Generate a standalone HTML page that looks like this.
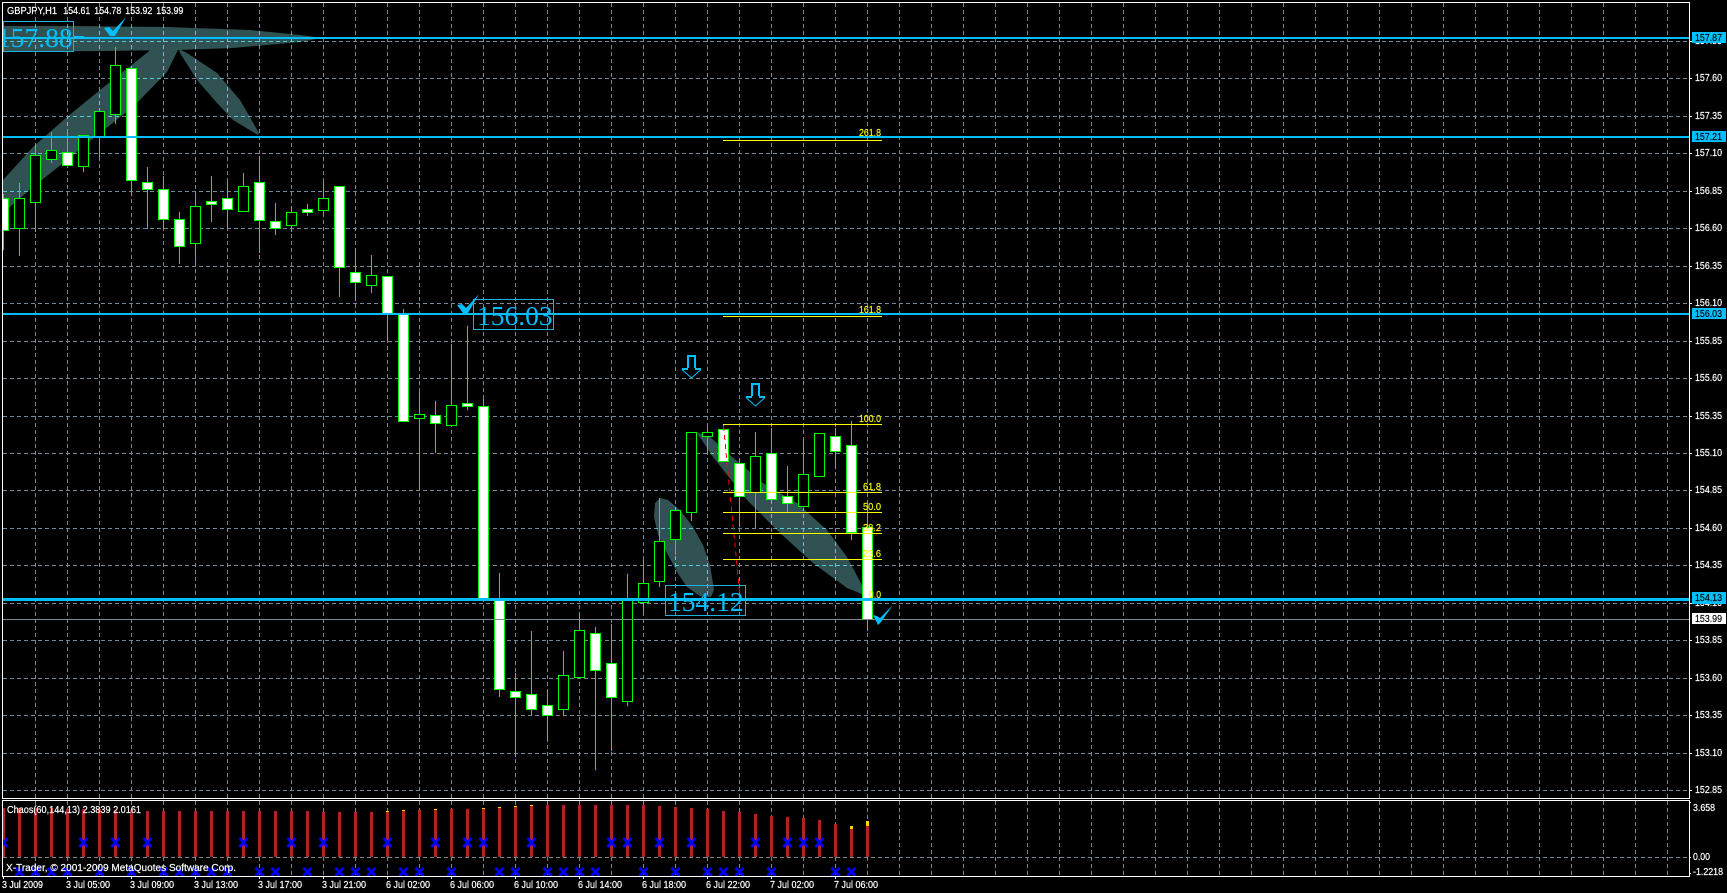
<!DOCTYPE html>
<html>
<head>
<meta charset="utf-8">
<title>GBPJPY,H1</title>
<style>
html,body{margin:0;padding:0;background:#000;width:1727px;height:893px;overflow:hidden}
svg{display:block}
.t{font-family:"Liberation Sans",sans-serif;font-size:10px;fill:#fff;stroke:#fff;stroke-width:.2}
.f{font-family:"Liberation Sans",sans-serif;font-size:10px;fill:#ff0;stroke:#ff0;stroke-width:.15}
.b{font-family:"Liberation Serif",serif;font-size:27.5px;fill:#00bfff}
.k{font-family:"Liberation Sans",sans-serif;font-size:10px;fill:#000;stroke:#000;stroke-width:.15}
</style>
</head>
<body>
<svg width="1727" height="893" viewBox="0 0 1727 893" xmlns="http://www.w3.org/2000/svg">
<defs>
<clipPath id="chart"><rect x="3" y="3" width="1686" height="873"/></clipPath>
<clipPath id="ell">
<polygon points="3,26 73,26 167,27 250,30 300,35 322,38 300,42 233,48 178,50 100,51 3,52"/>
<polygon points="177,42 153,48 100,90 67,117 33,147 3,180 3,213 33,187 67,160 100,133 133,107 167,72 178,50"/>
<polygon points="179,49 187,53 217,73 240,100 259,133 258,135 233,120 217,103 197,80 180,53"/>
<polygon points="660,498 668,500 680,510 693,527 703,545 710,565 714,590 711,597 700,596 687,587 677,572 667,553 658,535 654,517 655,503"/>
<polygon points="697,433 708,435 730,455 763,483 797,503 827,530 847,557 863,587 864,595 847,588 813,563 780,533 747,500 713,457"/>
</clipPath>
<path id="grid" fill="none" stroke-dasharray="4 3" d="M3 41.5H1689M3 78.5H1689M3 116.5H1689M3 153.5H1689M3 191.5H1689M3 228.5H1689M3 266.5H1689M3 303.5H1689M3 341.5H1689M3 378.5H1689M3 416.5H1689M3 453.5H1689M3 490.5H1689M3 528.5H1689M3 565.5H1689M3 603.5H1689M3 640.5H1689M3 678.5H1689M3 715.5H1689M3 753.5H1689M3 790.5H1689M3 857.5H1689
M35.5 3V876M67.5 3V876M99.5 3V876M131.5 3V876M163.5 3V876M195.5 3V876M227.5 3V876M259.5 3V876M291.5 3V876M323.5 3V876M355.5 3V876M387.5 3V876M419.5 3V876M451.5 3V876M483.5 3V876M515.5 3V876M547.5 3V876M579.5 3V876M611.5 3V876M643.5 3V876M675.5 3V876M707.5 3V876M739.5 3V876M771.5 3V876M803.5 3V876M835.5 3V876M867.5 3V876M899.5 3V876M931.5 3V876M963.5 3V876M995.5 3V876M1027.5 3V876M1059.5 3V876M1091.5 3V876M1123.5 3V876M1155.5 3V876M1187.5 3V876M1219.5 3V876M1251.5 3V876M1283.5 3V876M1315.5 3V876M1347.5 3V876M1379.5 3V876M1411.5 3V876M1443.5 3V876M1475.5 3V876M1507.5 3V876M1539.5 3V876M1571.5 3V876M1603.5 3V876M1635.5 3V876M1667.5 3V876"/>
</defs>
<rect width="1727" height="893" fill="#000"/>

<g clip-path="url(#chart)">
<!-- ellipses -->
<rect x="0" y="0" width="1727" height="893" fill="#315252" clip-path="url(#ell)"/>
<!-- grid -->
<g shape-rendering="crispEdges">
<use href="#grid" stroke="#778899"/>
<g clip-path="url(#ell)"><use href="#grid" stroke="#58c7d6"/></g>
</g>

<!-- chaos histogram -->
<g shape-rendering="crispEdges" fill="none" stroke-width="3">
<path stroke="#b22222" d="M3.5 808V857M19.5 808V857M35.5 808V857M51.5 808V857M67.5 809V857M83.5 809V857M99.5 809V857M115.5 810V857M131.5 810V857M147.5 811V857M163.5 811V857M179.5 811V857M195.5 811V857M211.5 811V857M227.5 811V857M243.5 811V857M259.5 811V857M275.5 811V857M291.5 811V857M307.5 811V857M323.5 812V857M339.5 812V857M355.5 812V857M371.5 812V857M387.5 812V857M403.5 811V857M419.5 810V857M435.5 810V857M451.5 809V857M467.5 809V857M483.5 809V857M499.5 808V857M515.5 807V857M531.5 806V857M547.5 805V857M563.5 805V857M579.5 805V857M595.5 805V857M611.5 805V857M627.5 805V857M643.5 805V857M659.5 806V857M675.5 807V857M691.5 808V857M707.5 809V857M723.5 811V857M739.5 812V857M755.5 814V857M771.5 816V857M787.5 817V857M803.5 818V857M819.5 820V857M835.5 824V857M851.5 829V857M867.5 826V857"/>
<path stroke="#ffd700" d="M387.5 811V812M403.5 810V811M435.5 809V810M483.5 808V809M499.5 807V808M515.5 806V807M531.5 805V806M851.5 826V829M867.5 821V826"/>
</g>

<!-- blue X marks -->
<path fill="none" stroke="#0000ff" stroke-width="2.8" d="M-.5 838l8 9m0-9l-8 9M79.5 838l8 9m0-9l-8 9M111.5 838l8 9m0-9l-8 9M143.5 838l8 9m0-9l-8 9M239.5 838l8 9m0-9l-8 9M287.5 838l8 9m0-9l-8 9M319.5 838l8 9m0-9l-8 9M383.5 838l8 9m0-9l-8 9M431.5 838l8 9m0-9l-8 9M463.5 838l8 9m0-9l-8 9M479.5 838l8 9m0-9l-8 9M527.5 838l8 9m0-9l-8 9M607.5 838l8 9m0-9l-8 9M623.5 838l8 9m0-9l-8 9M655.5 838l8 9m0-9l-8 9M687.5 838l8 9m0-9l-8 9M751.5 838l8 9m0-9l-8 9M783.5 838l8 9m0-9l-8 9M799.5 838l8 9m0-9l-8 9M815.5 838l8 9m0-9l-8 9
M15.5 868l8 8m0-8l-8 8M31.5 868l8 8m0-8l-8 8M47.5 868l8 8m0-8l-8 8M63.5 868l8 8m0-8l-8 8M95.5 868l8 8m0-8l-8 8M127.5 868l8 8m0-8l-8 8M159.5 868l8 8m0-8l-8 8M175.5 868l8 8m0-8l-8 8M191.5 868l8 8m0-8l-8 8M207.5 868l8 8m0-8l-8 8M223.5 868l8 8m0-8l-8 8M255.5 868l8 8m0-8l-8 8M271.5 868l8 8m0-8l-8 8M303.5 868l8 8m0-8l-8 8M335.5 868l8 8m0-8l-8 8M351.5 868l8 8m0-8l-8 8M367.5 868l8 8m0-8l-8 8M399.5 868l8 8m0-8l-8 8M415.5 868l8 8m0-8l-8 8M447.5 868l8 8m0-8l-8 8M495.5 868l8 8m0-8l-8 8M511.5 868l8 8m0-8l-8 8M543.5 868l8 8m0-8l-8 8M559.5 868l8 8m0-8l-8 8M575.5 868l8 8m0-8l-8 8M591.5 868l8 8m0-8l-8 8M639.5 868l8 8m0-8l-8 8M671.5 868l8 8m0-8l-8 8M703.5 868l8 8m0-8l-8 8M719.5 868l8 8m0-8l-8 8M735.5 868l8 8m0-8l-8 8M767.5 868l8 8m0-8l-8 8M831.5 868l8 8m0-8l-8 8M847.5 868l8 8m0-8l-8 8"/>

<!-- candles -->
<g shape-rendering="crispEdges" stroke="#00ff00">
<path fill="none" d="M3.5 194V250M19.5 183V256M35.5 147V232M51.5 132V163M67.5 130V165M83.5 135V172M99.5 111V157M115.5 47V124M131.5 68V196M147.5 167V229M163.5 176V229M179.5 212V264M195.5 194V262M211.5 176V222M227.5 182V228M243.5 173V211M259.5 156V253M275.5 203V235M291.5 206V232M307.5 204V216M323.5 182V215M339.5 186V297M355.5 248V301M371.5 255V293M387.5 276V340M403.5 309V421M419.5 392V490M435.5 401V453M451.5 344V425M467.5 326V410M483.5 398V600M499.5 573V697M515.5 673V757M531.5 631V715M547.5 690V741M563.5 651V716M579.5 613V677M595.5 627V770M611.5 624V751M627.5 574V706M643.5 560V613M659.5 498V587M675.5 510V555M691.5 432V521M707.5 427V453M723.5 424V461M739.5 458V527M755.5 432V528M771.5 428V499M787.5 466V512M803.5 439V506M819.5 433V476M835.5 428V469M851.5 421V540M867.5 500V631"/>
<path fill="#000" d="M14.5 198.5h10v30h-10zM30.5 155.5h10v47h-10zM46.5 150.5h10v9h-10zM78.5 135.5h10v31h-10zM94.5 111.5h10v26h-10zM110.5 65.5h10v49h-10zM190.5 206.5h10v37h-10zM238.5 186.5h10v25h-10zM286.5 212.5h10v13h-10zM318.5 198.5h10v12h-10zM366.5 275.5h10v10h-10zM414.5 414.5h10v4h-10zM446.5 405.5h10v20h-10zM558.5 675.5h10v34h-10zM574.5 630.5h10v47h-10zM622.5 599.5h10v102h-10zM638.5 583.5h10v19h-10zM654.5 541.5h10v40h-10zM670.5 510.5h10v29h-10zM686.5 432.5h10v80h-10zM702.5 432.5h10v4h-10zM750.5 456.5h10v36h-10zM798.5 474.5h10v32h-10zM814.5 433.5h10v43h-10z"/>
<path fill="#fff" d="M-1.5 198.5h10v32h-10zM62.5 152.5h10v13h-10zM126.5 68.5h10v112h-10zM142.5 182.5h10v7h-10zM158.5 189.5h10v30h-10zM174.5 219.5h10v27h-10zM206.5 201.5h10v3h-10zM222.5 198.5h10v11h-10zM254.5 182.5h10v38h-10zM270.5 221.5h10v7h-10zM302.5 209.5h10v3h-10zM334.5 186.5h10v81h-10zM350.5 272.5h10v10h-10zM382.5 276.5h10v37h-10zM398.5 313.5h10v108h-10zM430.5 415.5h10v8h-10zM462.5 403.5h10v3h-10zM478.5 406.5h10v194h-10zM494.5 599.5h10v90h-10zM510.5 691.5h10v6h-10zM526.5 694.5h10v15h-10zM542.5 705.5h10v10h-10zM590.5 633.5h10v37h-10zM606.5 663.5h10v34h-10zM718.5 429.5h10v32h-10zM734.5 463.5h10v33h-10zM766.5 453.5h10v46h-10zM782.5 496.5h10v7h-10zM830.5 436.5h10v15h-10zM846.5 445.5h10v87h-10zM862.5 527.5h10v92h-10z"/>
</g>

<!-- bid line -->
<rect x="3" y="619" width="1686" height="1" fill="#7f8c96"/>

<!-- red trend -->
<path d="M723.5 426L740 597" fill="none" stroke="#ff0000" stroke-width="1" stroke-dasharray="5 4" shape-rendering="crispEdges"/>

<!-- fibo -->
<g shape-rendering="crispEdges" fill="#ffff00">
<rect x="723" y="140" width="159" height="1"/>
<rect x="723" y="316" width="159" height="1"/>
<rect x="723" y="424" width="159" height="1"/>
<rect x="723" y="492" width="159" height="1"/>
<rect x="723" y="512" width="159" height="1"/>
<rect x="723" y="533" width="159" height="1"/>
<rect x="723" y="559" width="159" height="1"/>
</g>
<text class="f" x="859" y="136" textLength="22" lengthAdjust="spacingAndGlyphs">261.8</text>
<text class="f" x="859" y="313" textLength="22" lengthAdjust="spacingAndGlyphs">161.8</text>
<text class="f" x="859" y="422" textLength="22" lengthAdjust="spacingAndGlyphs">100.0</text>
<text class="f" x="863" y="490" textLength="18" lengthAdjust="spacingAndGlyphs">61.8</text>
<text class="f" x="863" y="510" textLength="18" lengthAdjust="spacingAndGlyphs">50.0</text>
<text class="f" x="863" y="531" textLength="18" lengthAdjust="spacingAndGlyphs">38.2</text>
<text class="f" x="863" y="557" textLength="18" lengthAdjust="spacingAndGlyphs">23.6</text>
<text class="f" x="869" y="598" textLength="12" lengthAdjust="spacingAndGlyphs">0.0</text>

<!-- blue hlines -->
<g shape-rendering="crispEdges" fill="#00bfff">
<rect x="3" y="37" width="1686" height="2"/>
<rect x="3" y="136" width="1686" height="2"/>
<rect x="3" y="313" width="1686" height="2"/>
<rect x="3" y="598" width="1686" height="3"/>
</g>
<rect x="74" y="36" width="10" height="1" fill="#00bfff"/>

<!-- price callouts -->
<g fill="none" stroke="#1fb0e0" shape-rendering="crispEdges">
<rect x="3.5" y="21.5" width="70" height="30"/>
<rect x="473.5" y="299.5" width="80" height="30"/>
<rect x="665.5" y="585.5" width="80" height="30"/>
</g>
<text class="b" x="-3" y="47">157.88</text>
<text class="b" x="477" y="325">156.03</text>
<text class="b" x="668" y="611">154.12</text>

<!-- check marks -->
<g fill="#00bfff">
<polygon points="104,28 109,27 113,31 126,17 115,36 110,36"/>
<polygon points="457,305 462,304 466,308 479,294 468,313 463,313"/>
<polygon points="873,615 877,616 880,618 893,605 881,622 878,625"/>
</g>

<!-- arrows -->
<g fill="none" stroke="#00bfff">
<path stroke-width="2" d="M688 368V356H695V368M682 369H688M695 369H701"/>
<path stroke-width="1" d="M682 369.5L691.5 378L701 369.5"/>
<path stroke-width="2" d="M752 396V384H759V396M746 397H752M759 397H765"/>
<path stroke-width="1" d="M746 397.5L755.5 406L765 397.5"/>
</g>
</g>

<!-- frames -->
<g fill="none" stroke="#fff" shape-rendering="crispEdges">
<rect x="2.5" y="2.5" width="1687" height="796"/>
<rect x="2.5" y="800.5" width="1687" height="76"/>
<path d="M1689 41.5h3M1689 78.5h3M1689 116.5h3M1689 153.5h3M1689 191.5h3M1689 228.5h3M1689 266.5h3M1689 303.5h3M1689 341.5h3M1689 378.5h3M1689 416.5h3M1689 453.5h3M1689 490.5h3M1689 528.5h3M1689 565.5h3M1689 603.5h3M1689 640.5h3M1689 678.5h3M1689 715.5h3M1689 753.5h3M1689 790.5h3M1689 802.5h2M1689 857.5h2M1689 873.5h2
M3.5 876v3M67.5 876v3M131.5 876v3M195.5 876v3M259.5 876v3M323.5 876v3M387.5 876v3M451.5 876v3M515.5 876v3M579.5 876v3M643.5 876v3M707.5 876v3M771.5 876v3M835.5 876v3"/>
</g>

<!-- top-left texts -->
<text class="t" x="7" y="14" textLength="50" lengthAdjust="spacingAndGlyphs">GBPJPY,H1</text>
<text class="t" x="63.3" y="14" textLength="27" lengthAdjust="spacingAndGlyphs">154.61</text>
<text class="t" x="94.3" y="14" textLength="27" lengthAdjust="spacingAndGlyphs">154.78</text>
<text class="t" x="125.3" y="14" textLength="27" lengthAdjust="spacingAndGlyphs">153.92</text>
<text class="t" x="156.3" y="14" textLength="27" lengthAdjust="spacingAndGlyphs">153.99</text>
<text class="t" x="7" y="813" textLength="134" lengthAdjust="spacingAndGlyphs">Chaos(60,144,13) 2.3839 2.0161</text>
<text class="t" x="6" y="871" textLength="230" lengthAdjust="spacingAndGlyphs">X-Trader, © 2001-2009 MetaQuotes Software Corp.</text>

<!-- price axis -->
<g>
<text class="t" x="1695" y="44" textLength="27" lengthAdjust="spacingAndGlyphs">157.85</text>
<text class="t" x="1695" y="81" textLength="27" lengthAdjust="spacingAndGlyphs">157.60</text>
<text class="t" x="1695" y="119" textLength="27" lengthAdjust="spacingAndGlyphs">157.35</text>
<text class="t" x="1695" y="156" textLength="27" lengthAdjust="spacingAndGlyphs">157.10</text>
<text class="t" x="1695" y="194" textLength="27" lengthAdjust="spacingAndGlyphs">156.85</text>
<text class="t" x="1695" y="231" textLength="27" lengthAdjust="spacingAndGlyphs">156.60</text>
<text class="t" x="1695" y="269" textLength="27" lengthAdjust="spacingAndGlyphs">156.35</text>
<text class="t" x="1695" y="306" textLength="27" lengthAdjust="spacingAndGlyphs">156.10</text>
<text class="t" x="1695" y="344" textLength="27" lengthAdjust="spacingAndGlyphs">155.85</text>
<text class="t" x="1695" y="381" textLength="27" lengthAdjust="spacingAndGlyphs">155.60</text>
<text class="t" x="1695" y="419" textLength="27" lengthAdjust="spacingAndGlyphs">155.35</text>
<text class="t" x="1695" y="456" textLength="27" lengthAdjust="spacingAndGlyphs">155.10</text>
<text class="t" x="1695" y="493" textLength="27" lengthAdjust="spacingAndGlyphs">154.85</text>
<text class="t" x="1695" y="531" textLength="27" lengthAdjust="spacingAndGlyphs">154.60</text>
<text class="t" x="1695" y="568" textLength="27" lengthAdjust="spacingAndGlyphs">154.35</text>
<text class="t" x="1695" y="606" textLength="27" lengthAdjust="spacingAndGlyphs">154.10</text>
<text class="t" x="1695" y="643" textLength="27" lengthAdjust="spacingAndGlyphs">153.85</text>
<text class="t" x="1695" y="681" textLength="27" lengthAdjust="spacingAndGlyphs">153.60</text>
<text class="t" x="1695" y="718" textLength="27" lengthAdjust="spacingAndGlyphs">153.35</text>
<text class="t" x="1695" y="756" textLength="27" lengthAdjust="spacingAndGlyphs">153.10</text>
<text class="t" x="1695" y="793" textLength="27" lengthAdjust="spacingAndGlyphs">152.85</text>

<g shape-rendering="crispEdges">
<rect x="1692" y="32" width="34" height="11" fill="#00bfff"/>
<rect x="1692" y="131" width="34" height="11" fill="#00bfff"/>
<rect x="1692" y="308" width="34" height="11" fill="#00bfff"/>
<rect x="1692" y="592" width="34" height="12" fill="#00bfff"/>
<rect x="1692" y="613" width="34" height="11" fill="#fff"/>
</g>
<text class="k" x="1695" y="41" textLength="27" lengthAdjust="spacingAndGlyphs">157.87</text>
<text class="k" x="1695" y="140" textLength="27" lengthAdjust="spacingAndGlyphs">157.21</text>
<text class="k" x="1695" y="317" textLength="27" lengthAdjust="spacingAndGlyphs">156.03</text>
<text class="k" x="1695" y="601" textLength="27" lengthAdjust="spacingAndGlyphs">154.13</text>
<text class="k" x="1695" y="622" textLength="27" lengthAdjust="spacingAndGlyphs">153.99</text>

<text class="t" x="1693" y="811" textLength="22" lengthAdjust="spacingAndGlyphs">3.658</text>
<text class="t" x="1693" y="860" textLength="17" lengthAdjust="spacingAndGlyphs">0.00</text>
<text class="t" x="1693" y="875" textLength="30" lengthAdjust="spacingAndGlyphs">-1.2218</text>
</g>

<!-- time axis -->
<g>
<text class="t" x="2" y="888" textLength="41" lengthAdjust="spacingAndGlyphs">3 Jul 2009</text>
<text class="t" x="66" y="888" textLength="44" lengthAdjust="spacingAndGlyphs">3 Jul 05:00</text>
<text class="t" x="130" y="888" textLength="44" lengthAdjust="spacingAndGlyphs">3 Jul 09:00</text>
<text class="t" x="194" y="888" textLength="44" lengthAdjust="spacingAndGlyphs">3 Jul 13:00</text>
<text class="t" x="258" y="888" textLength="44" lengthAdjust="spacingAndGlyphs">3 Jul 17:00</text>
<text class="t" x="322" y="888" textLength="44" lengthAdjust="spacingAndGlyphs">3 Jul 21:00</text>
<text class="t" x="386" y="888" textLength="44" lengthAdjust="spacingAndGlyphs">6 Jul 02:00</text>
<text class="t" x="450" y="888" textLength="44" lengthAdjust="spacingAndGlyphs">6 Jul 06:00</text>
<text class="t" x="514" y="888" textLength="44" lengthAdjust="spacingAndGlyphs">6 Jul 10:00</text>
<text class="t" x="578" y="888" textLength="44" lengthAdjust="spacingAndGlyphs">6 Jul 14:00</text>
<text class="t" x="642" y="888" textLength="44" lengthAdjust="spacingAndGlyphs">6 Jul 18:00</text>
<text class="t" x="706" y="888" textLength="44" lengthAdjust="spacingAndGlyphs">6 Jul 22:00</text>
<text class="t" x="770" y="888" textLength="44" lengthAdjust="spacingAndGlyphs">7 Jul 02:00</text>
<text class="t" x="834" y="888" textLength="44" lengthAdjust="spacingAndGlyphs">7 Jul 06:00</text>
</g>
</svg>
</body>
</html>
